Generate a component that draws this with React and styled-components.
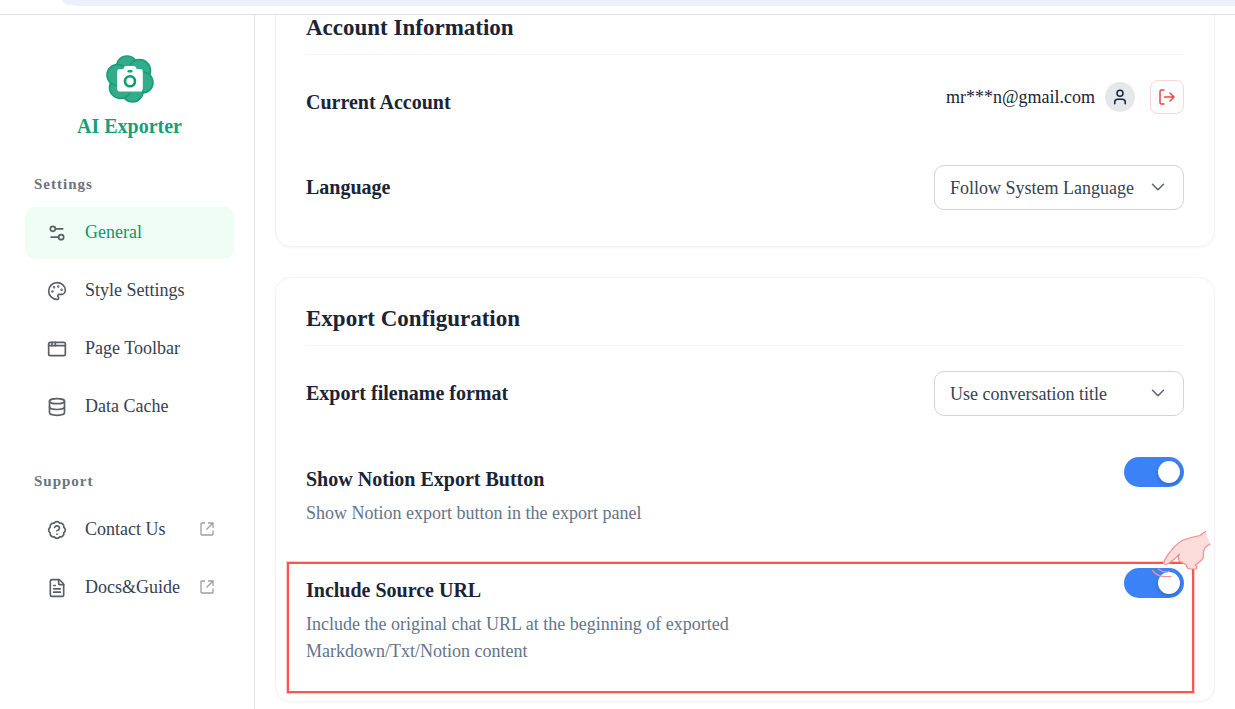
import React, { useState } from 'react';
import styled, { createGlobalStyle } from 'styled-components';
import {
	AppWindow,
	BadgeQuestionMark,
	ChevronDown,
	Database,
	FileText,
	Palette,
	Settings2,
	User,
} from 'lucide-react';

const GlobalStyle = createGlobalStyle`
	* {
		box-sizing: border-box;
		margin: 0;
		padding: 0;
	}
	body {
		font-family: 'Liberation Serif', 'Times New Roman', serif;
		background: #fff;
		color: #1a2436;
	}
	button, input, select {
		font-family: inherit;
	}
`;
const Page = styled.div`
	height: 100vh;
	display: flex;
	flex-direction: column;
	overflow: hidden;
`;
const TopBar = styled.div`
	flex: none;
	height: 15px;
	padding-left: 62px;
	border-bottom: 1px solid #dfe0e2;
`;
const AddressBar = styled.div`
	height: 6px;
	background: #ecf0fa;
	border-bottom-left-radius: 18px 6px;
`;
const Body = styled.div`
	flex: 1;
	min-height: 0;
	display: flex;
`;
const Sidebar = styled.aside`
	flex: none;
	width: 255px;
	padding: 40px 20px 0 25px;
	border-right: 1px solid #e5e5e5;
`;
const Brand = styled.div`
	display: flex;
	flex-direction: column;
	align-items: center;
	gap: 10px;
	margin-bottom: 35px;
	color: #15a07a;
	font-size: 20px;
	font-weight: 700;
	line-height: 26px;
`;
const NavTitle = styled.h2`
	padding-left: 9px;
	margin-bottom: 13px;
	color: #6b7280;
	font-size: 15px;
	font-weight: 700;
	line-height: 20px;
	letter-spacing: 1px;
`;
const NavList = styled.nav`
	display: flex;
	flex-direction: column;
	gap: 6px;
	margin-bottom: 38px;
`;
const NavItem = styled.a`
	height: 52px;
	display: flex;
	align-items: center;
	padding: 0 20px 0 22px;
	border-radius: 10px;
	background: ${({ $active }) => ($active ? '#f0fdf6' : 'transparent')};
	color: ${({ $active }) => ($active ? '#0d9668' : '#374151')};
	font-size: 18px;
	text-decoration: none;

	svg {
		flex: none;
		color: #5b5f67;
	}
	span {
		flex: 1;
		margin-left: 18px;
		padding-bottom: 2px;
	}
	svg + span + svg {
		margin-bottom: 2px;
		color: #9b9ea4;
	}
`;
const Main = styled.main`
	flex: 1;
	min-width: 0;
	overflow: hidden;
	padding: 0 20px;
`;
/* the list is scrolled down a little, so the first card starts above the fold */
const Cards = styled.div`
	display: flex;
	flex-direction: column;
	gap: 30px;
	margin-top: -29px;
`;
const Card = styled.section`
	padding: 25px 30px 36px;
	border: 1px solid #f3f4f6;
	border-radius: 16px;
	background: #fff;
	box-shadow: 0 1px 3px rgba(15, 23, 42, 0.04);
`;
const CardTitle = styled.h2`
	padding-bottom: 10px;
	margin-bottom: 25px;
	border-bottom: 1px solid #f3f4f6;
	font-size: 23px;
	font-weight: 700;
	line-height: 32px;
`;
const Rows = styled.div`
	display: flex;
	flex-direction: column;
	gap: 41px;
`;
const Row = styled.div`
	position: relative;
	min-height: 44px;
	display: flex;
	align-items: flex-start;
	justify-content: space-between;
`;
const RowText = styled.div`
	max-width: 450px;
	padding-top: 8px;
`;
const RowLabel = styled.label`
	display: block;
	font-size: 20px;
	font-weight: 700;
	line-height: 28px;
`;
const RowHint = styled.p`
	margin-top: 7px;
	color: #64748b;
	font-size: 18px;
	line-height: 27px;
`;
const Account = styled.div`
	display: flex;
	align-items: center;
	font-size: 18px;
`;
const Avatar = styled.span`
	width: 30px;
	height: 30px;
	display: flex;
	align-items: center;
	justify-content: center;
	margin: 0 15px 0 10px;
	border-radius: 50%;
	background: #e5e7eb;
`;
const LogoutButton = styled.button`
	width: 34px;
	height: 34px;
	display: flex;
	align-items: center;
	justify-content: center;
	border: 1px solid #fdd5d5;
	border-radius: 8px;
	background: #fff;
	color: #ef4444;
	cursor: pointer;
`;
const SelectWrap = styled.div`
	position: relative;
	width: 250px;

	svg {
		position: absolute;
		top: 11px;
		right: 15px;
		color: #5f6574;
		pointer-events: none;
	}
`;
const Select = styled.select`
	width: 100%;
	height: 45px;
	display: block;
	padding: 0 40px 0 15px;
	appearance: none;
	border: 1px solid #d1d5db;
	border-radius: 10px;
	background: #fff;
	color: #374151;
	font-size: 18px;
	cursor: pointer;
`;
const Switch = styled.input`
	flex: none;
	width: 60px;
	height: 30px;
	display: flex;
	align-items: center;
	padding: 0 4px;
	appearance: none;
	border-radius: 15px;
	background: #d1d5db;
	cursor: pointer;

	&::before {
		content: '';
		width: 22px;
		height: 22px;
		border-radius: 50%;
		background: #fff;
		box-shadow: 0 2px 4px rgba(0, 0, 0, 0.2);
	}
	&:checked {
		justify-content: flex-end;
		background: #3b82f6;
	}
`;
const Highlight = styled.div`
	position: absolute;
	inset: -6px -10px -28px -19px;
	border: 2px solid #ff5253;
	box-shadow: 0 0 0 1px rgba(255, 82, 83, 0.3);
	pointer-events: none;
`;
const Pointer = styled.svg`
	position: absolute;
	top: -42px;
	right: -32px;
	pointer-events: none;
`;

const Logo = () => (
	<svg width="48" height="48" viewBox="0 0 48 48" aria-hidden="true">
		<g fill="#34ab8b" stroke="#15a07a" strokeWidth="1.600">
			<circle cx="21" cy="11.500" r="10.500" />
			<circle cx="33.500" cy="15.500" r="11" />
			<circle cx="36.500" cy="27.500" r="10.500" />
			<circle cx="26.500" cy="36.500" r="10.500" />
			<circle cx="14.500" cy="32.500" r="11" />
			<circle cx="11.500" cy="20" r="10.500" />
		</g>
		<circle cx="24" cy="24" r="14" fill="#34ab8b" />
		<path d="M14 14h3.500q.3-3 3-3h7q2.700 0 3 3H34q2.800 0 2.800 2.800v17q0 2.800-2.800 2.800H14q-2.800 0-2.800-2.800v-17Q11.200 14 14 14z" fill="#fff" />
		<rect x="21.500" y="15" width="5" height="2.400" rx="1.200" fill="#15a07a" />
		<circle cx="24" cy="26.300" r="5" fill="#fff" stroke="#109a72" strokeWidth="2.600" />
	</svg>
);

const ExternalIcon = () => (
	<svg width="14" height="14" viewBox="0 0 14 14" fill="none" stroke="currentColor" strokeWidth="1.300" aria-hidden="true">
		<path d="M5 1H1.800q-.8 0-.8.8v10.400q0 .8.8.8h10.400q.8 0 .8-.8V8.500" />
		<path d="M8 1h5v5M13 1L6.500 7.500" />
	</svg>
);

const LogoutIcon = () => (
	<svg width="16" height="16" viewBox="0 0 16 16" fill="none" stroke="currentColor" strokeWidth="1.500" strokeLinecap="round" strokeLinejoin="round" aria-hidden="true">
		<path d="M5 1H2.500Q1 1 1 2.500v11Q1 15 2.500 15H5" />
		<path d="M5.500 8H15M11 4l4 4-4 4" />
	</svg>
);

const Hand = () => (
	<Pointer width="68" height="56" viewBox="0 0 68 56" fill="none" stroke="#f98f8c" strokeWidth="1.200" strokeLinecap="round" strokeLinejoin="round" aria-hidden="true">
		<path
			d="M57.500 5.500L52 9.500 45 11l-10 3q-8 5-13 12-5 6-6.500 11 .5 2 4 1 5-3 8-6l4-4q-2 3-.5 7l7 3.500q1 4 3.500 4.500h7q1-3-1.500-4 7-4 8.500-8-.5-6 1.500-9.500l5-3.500z"
			fill="#fddcdc"
			stroke="none"
		/>
		<path d="M57.500 5.500L52 9.500 45 11l-10 3q-8 5-13 12-5 6-6.500 11 .5 2 4 1 5-3 8-6l4-4q-2 3-.5 7l7 3.500q1 4 3.500 4.500h7q1-3-1.500-4 7-4 8.500-8-.5-6 1.500-9.500l5-3.500" />
		<path d="M4.500 44.500q5 6 11.500 6h7M10.500 43q5 4.500 11 2" />
	</Pointer>
);

const settingsLinks = [
	{ label: 'General', icon: Settings2, active: true },
	{ label: 'Style Settings', icon: Palette },
	{ label: 'Page Toolbar', icon: AppWindow },
	{ label: 'Data Cache', icon: Database },
];
const supportLinks = [
	{ label: 'Contact Us', icon: BadgeQuestionMark, external: true },
	{ label: 'Docs&Guide', icon: FileText, external: true },
];

const NavSection = ({ title, links }) => (
	<>
		<NavTitle>{title}</NavTitle>
		<NavList>
			{links.map(({ label, icon: Icon, active, external }) => (
				<NavItem key={label} href="#" $active={active}>
					<Icon size={20} strokeWidth={2} />
					<span>{label}</span>
					{external && <ExternalIcon />}
				</NavItem>
			))}
		</NavList>
	</>
);

const SelectRow = ({ id, label, options }) => (
	<Row>
		<RowText>
			<RowLabel htmlFor={id}>{label}</RowLabel>
		</RowText>
		<SelectWrap>
			<Select id={id}>
				{options.map((option) => (
					<option key={option}>{option}</option>
				))}
			</Select>
			<ChevronDown size={22} strokeWidth={1.7} />
		</SelectWrap>
	</Row>
);

const SwitchRow = ({ id, label, hint, children }) => {
	const [on, setOn] = useState(true);

	return (
		<Row>
			<RowText>
				<RowLabel htmlFor={id}>{label}</RowLabel>
				<RowHint>{hint}</RowHint>
			</RowText>
			<Switch id={id} type="checkbox" role="switch" checked={on} onChange={() => setOn(!on)} />
			{children}
		</Row>
	);
};

const App = () => {
	return (
		<>
			<GlobalStyle />
			<Page>
				<TopBar>
					<AddressBar />
				</TopBar>
				<Body>
					<Sidebar>
						<Brand>
							<Logo />
							AI Exporter
						</Brand>
						<NavSection title="Settings" links={settingsLinks} />
						<NavSection title="Support" links={supportLinks} />
					</Sidebar>
					<Main>
						<Cards>
							<Card>
								<CardTitle>Account Information</CardTitle>
								<Rows>
									<Row>
										<RowText>
											<RowLabel as="div">Current Account</RowLabel>
										</RowText>
										<Account>
											mr***n@gmail.com
											<Avatar>
												<User size={18} strokeWidth={2} />
											</Avatar>
											<LogoutButton type="button" aria-label="Log out">
												<LogoutIcon />
											</LogoutButton>
										</Account>
									</Row>
									<SelectRow id="language" label="Language" options={['Follow System Language']} />
								</Rows>
							</Card>
							<Card>
								<CardTitle>Export Configuration</CardTitle>
								<Rows>
									<SelectRow id="filename" label="Export filename format" options={['Use conversation title']} />
									<SwitchRow
										id="notion"
										label="Show Notion Export Button"
										hint="Show Notion export button in the export panel"
									/>
									<SwitchRow
										id="source"
										label="Include Source URL"
										hint="Include the original chat URL at the beginning of exported Markdown/Txt/Notion content"
									>
										<Highlight />
										<Hand />
									</SwitchRow>
								</Rows>
							</Card>
						</Cards>
					</Main>
				</Body>
			</Page>
		</>
	);
};

export default App;
